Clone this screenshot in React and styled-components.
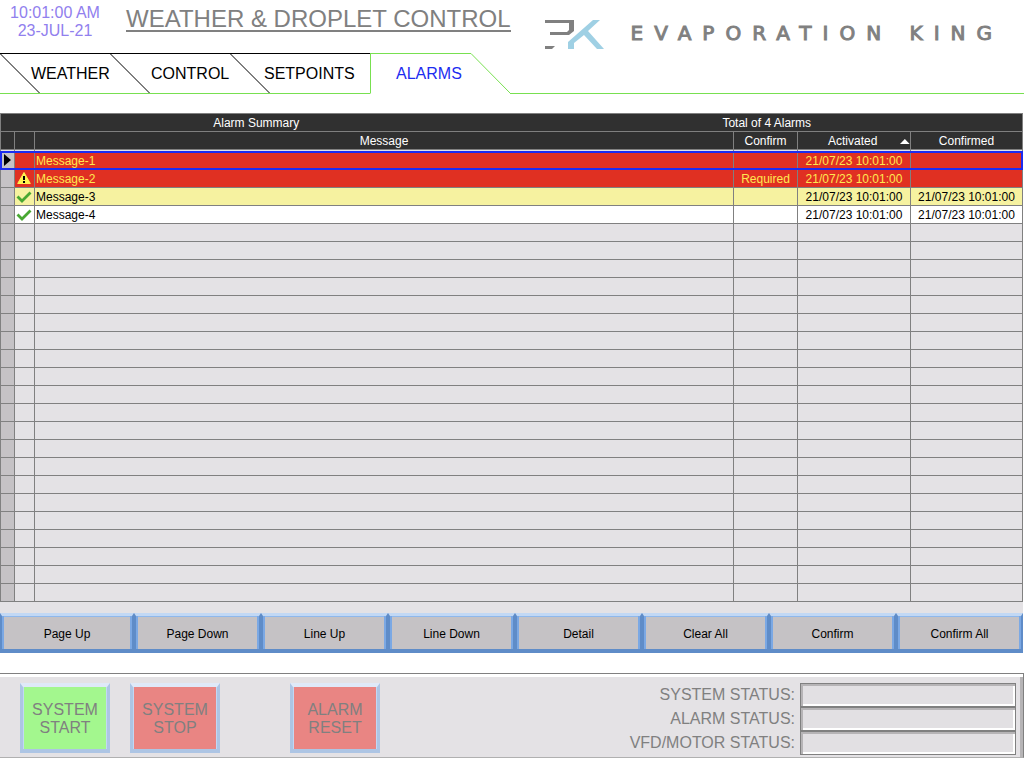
import React from 'react';
import styled, { createGlobalStyle } from 'styled-components';

const Global = createGlobalStyle`
  * { box-sizing: border-box; }
  body { margin: 0; background: #fff; font-family: "Liberation Sans", Arial, sans-serif; }
  button, input { font-family: inherit; }
`;

const Page = styled.div`
  display: flex;
  flex-direction: column;
  min-height: 100vh;
`;

const Header = styled.header`
  display: flex;
  align-items: flex-start;
  height: 53px;
`;

const Clock = styled.div`
  width: 110px;
  padding-top: 4px;
  font-size: 16px;
  line-height: 18px;
  text-align: center;
  color: #9180ee;
`;

const Title = styled.h1`
  margin: 8px 0 0 16px;
  border-bottom: 2px solid #808080;
  font-size: 24px;
  line-height: 22px;
  font-weight: 400;
  color: #808080;
  white-space: nowrap;
`;

const Brand = styled.div`
  display: flex;
  align-items: flex-start;
  margin-left: auto;
  padding: 19px 32px 0 0;
`;

const Mark = styled.svg`
  width: 60px;
  height: 31px;
  margin-right: 26px;
`;

const BrandName = styled.div`
  padding-top: 2px;
  font-family: "DejaVu Sans", sans-serif;
  font-size: 20px;
  line-height: 24px;
  letter-spacing: 11px;
  margin-right: -11px;
  color: #808080;
  -webkit-text-stroke: 1px #808080;
  white-space: nowrap;
`;

const Tabs = styled.nav`
  display: flex;
  height: 41px;
`;

const Tab = styled.a`
  display: flex;
  width: ${(p) => p.$width}px;
  border-top: 1px solid ${(p) => (p.$active ? '#78e050' : '#000')};
  border-bottom: 1px solid ${(p) => (p.$active ? 'transparent' : '#78e050')};
  border-left: ${(p) => (p.$active ? '1px solid #78e050' : 'none')};
  color: ${(p) => (p.$active ? '#1c2cf0' : '#000')};
  font-size: 16px;
  line-height: 39px;
  text-decoration: none;
`;

const TabText = styled.span`
  padding-left: ${(p) => p.$inset}px;
`;

const Slant = styled.svg`
  width: 40px;
  height: 41px;
  flex: none;
  margin: -1px -40px -1px 0;
`;

const TabEnd = styled.svg`
  width: 39px;
  height: 41px;
  flex: none;
`;

const TabRule = styled.div`
  flex: 1;
  border-bottom: 1px solid #78e050;
`;

const AlarmPanel = styled.main`
  margin: 19px 1px 0 0;
  background: #e4e2e5;
`;

const AlarmTable = styled.table`
  width: 100%;
  table-layout: fixed;
  border-collapse: separate;
  border-spacing: 0;
  font-size: 12px;
  line-height: 15px;
`;

const Caption = styled.caption`
  padding-top: 2px;
  border: 1px solid #808080;
  background: #303030;
  color: #fff;
`;

const CaptionRow = styled.div`
  display: grid;
  grid-template-columns: 1fr 1fr;
`;

const Col = styled.col`
  width: ${(p) => (p.$width ? `${p.$width}px` : 'auto')};
`;

const HeadCell = styled.th`
  height: 19px;
  padding: 2px 0;
  border-right: 1px solid #808080;
  background: #303030;
  box-shadow: inset 0 -1px #e4e2e5, inset 0 -2px #808080;
  color: #fff;
  font-weight: 400;
  &:first-child { border-left: 1px solid #808080; }
`;

const SortHead = styled.div`
  display: flex;
  justify-content: center;
  align-items: center;
  gap: 23px;
  padding-left: 30px;
`;

const tones = {
  alarm: ['#e03022', '#ffe850'],
  cleared: ['#f6f2a0', '#000'],
  confirmed: ['#fff', '#000'],
  empty: ['#e4e2e5', '#000'],
};

const Row = styled.tr`
  height: ${(p) => (p.$selected ? 19 : 18)}px;
  background: ${(p) => tones[p.$tone][0]};
  color: ${(p) => tones[p.$tone][1]};
  outline: ${(p) => (p.$selected ? '2px solid #1c2cf0' : 'none')};
  outline-offset: -2px;
`;

const Cell = styled.td`
  padding: 2px 1px 0;
  border-right: 1px solid #808080;
  border-bottom: 1px solid #808080;
  text-align: ${(p) => p.$align || 'center'};
  white-space: nowrap;
`;

const SelectCell = styled(Cell)`
  padding: 0;
  border-left: 1px solid #808080;
  background: #c5c2c5;
`;

const StateCell = styled(Cell)`
  padding: 1px 2px 0 1px;
  vertical-align: top;
`;

const Glyph = styled.svg`
  display: block;
  margin: 0 auto;
`;

const Commands = styled.div`
  display: grid;
  grid-template-columns: 134fr repeat(7, 127fr);
  padding-top: 11px;
`;

const CommandButton = styled.button`
  height: 40px;
  padding: 2px 0 0;
  border: solid;
  border-width: 3px 2px 4px;
  border-color: #c2d8f4 #5f8cc8 #5f8cc8;
  box-shadow: inset 2px 0 #7ba8e4, inset -2px 0 #7ba8e4, inset 0 1px #8fb8ec;
  background: #c5c2c5;
  color: #000;
  font-size: 12px;
`;

const Footer = styled.footer`
  display: flex;
  justify-content: space-between;
  align-items: flex-start;
  margin-top: 20px;
  padding: 6px 7px 2px 20px;
  border: solid;
  border-width: 1px 1px 1px 0;
  border-color: #808080 #808080 #b0b0b0;
  box-shadow: inset 0 3px #fff, inset -3px 0 #b6b4b6;
  background: #e4e2e5;
`;

const Actions = styled.div`
  display: flex;
  gap: 20px;
  padding-top: 3px;
`;

const ActionButton = styled.button`
  width: 90px;
  height: 70px;
  padding: 2px 0 0;
  margin-left: ${(p) => (p.$apart ? 50 : 0)}px;
  border: solid;
  border-width: 4px 3px;
  border-color: #dfe9f8 #adc5e4 #adc5e4;
  background: ${(p) => p.$color};
  box-shadow: inset 1px 0 #c2d8f4, inset -1px 0 #c2d8f4;
  color: #808080;
  font-size: 16px;
  line-height: 18px;
`;

const StatusForm = styled.div`
  display: grid;
  grid-template-columns: auto 216px;
  column-gap: 5px;
  padding-top: 3px;
`;

const StatusLabel = styled.label`
  color: #808080;
  font-size: 16px;
  line-height: 24px;
  text-align: right;
`;

const StatusField = styled.input`
  width: 100%;
  height: 24px;
  border: 1px solid #808080;
  border-radius: 0;
  background: #e2e0e3;
  box-shadow: inset 2px 2px #b6b4b6, inset -2px -2px #fff;
  outline: none;
`;

const time = '21/07/23 10:01:00';
const alarms = [
  { message: 'Message-1', tone: 'alarm', activated: time, selected: true },
  { message: 'Message-2', tone: 'alarm', icon: 'warning', confirm: 'Required', activated: time },
  { message: 'Message-3', tone: 'cleared', icon: 'check', activated: time, confirmed: time },
  { message: 'Message-4', tone: 'confirmed', icon: 'check', activated: time, confirmed: time },
  ...Array.from({ length: 21 }, () => ({ tone: 'empty' })),
];

const commands = ['Page Up', 'Page Down', 'Line Up', 'Line Down', 'Detail', 'Clear All', 'Confirm', 'Confirm All'];
const statuses = ['SYSTEM STATUS:', 'ALARM STATUS:', 'VFD/MOTOR STATUS:'];

function StateIcon({ kind }) {
  if (kind === 'warning') {
    return (
      <Glyph width="16" height="14" viewBox="0 0 16 14" role="img" aria-label="Unconfirmed">
        <path d="M8 1.5 14.3 12.5H1.7Z" fill="#fff250" stroke="#fff250" strokeLinejoin="round" />
        <path d="M7 5h2v4H7zM7 10h2v2H7z" fill="#000" />
      </Glyph>
    );
  }
  if (kind === 'check') {
    return (
      <Glyph width="16" height="14" viewBox="0 0 16 14" role="img" aria-label="Confirmed">
        <path d="M1.5 7.5 6 12 14.5 3.5" fill="none" stroke="#48a832" strokeWidth="2.8" />
      </Glyph>
    );
  }
  return null;
}

function TabSlant() {
  return (
    <Slant viewBox="0 0 40 41" aria-hidden="true">
      <path d="M0 0.5 39.5 40" stroke="#000" fill="none" />
    </Slant>
  );
}

export default function App() {
  return (
    <Page>
      <Global />
      <Header>
        <Clock>
          <div>10:01:00 AM</div>
          <div>23-JUL-21</div>
        </Clock>
        <Title>WEATHER &amp; DROPLET CONTROL</Title>
        <Brand>
          <Mark viewBox="0 0 60 31" aria-hidden="true">
            <path d="M0 1H29V12L24 16H5V13H22L24 11V4H0Z" fill="#808080" />
            <path d="M0 27H10L7 30H0Z" fill="#808080" />
            <path d="M48 1H55L43 12 59 30H52L39 16 29 24V30H23V23Z" fill="#9fd0e4" />
          </Mark>
          <BrandName>EVAPORATION KING</BrandName>
        </Brand>
      </Header>

      <Tabs>
        <Tab href="#weather" $width={110}><TabSlant /><TabText $inset={31}>WEATHER</TabText></Tab>
        <Tab href="#control" $width={120}><TabSlant /><TabText $inset={41}>CONTROL</TabText></Tab>
        <Tab href="#setpoints" $width={140}><TabSlant /><TabText $inset={34}>SETPOINTS</TabText></Tab>
        <Tab href="#alarms" $width={101} $active aria-current="page"><TabText $inset={25}>ALARMS</TabText></Tab>
        <TabEnd viewBox="0 0 39 41" aria-hidden="true">
          <path d="M0 0.5 39.5 40.5" stroke="#78e050" fill="none" />
        </TabEnd>
        <TabRule />
      </Tabs>

      <AlarmPanel>
        <AlarmTable>
          <Caption>
            <CaptionRow>
              <span>Alarm Summary</span>
              <span>Total of 4 Alarms</span>
            </CaptionRow>
          </Caption>
          <colgroup>
            <Col $width={15} />
            <Col $width={20} />
            <Col />
            <Col $width={64} />
            <Col $width={113} />
            <Col $width={112} />
          </colgroup>
          <thead>
            <tr>
              <HeadCell aria-label="Selected" />
              <HeadCell aria-label="State" />
              <HeadCell scope="col">Message</HeadCell>
              <HeadCell scope="col">Confirm</HeadCell>
              <HeadCell scope="col" aria-sort="ascending">
                <SortHead>
                  Activated
                  <svg width="10" height="5" viewBox="0 0 10 5" aria-hidden="true">
                    <path d="M5 0 10 5H0Z" fill="#fff" />
                  </svg>
                </SortHead>
              </HeadCell>
              <HeadCell scope="col">Confirmed</HeadCell>
            </tr>
          </thead>
          <tbody>
            {alarms.map((a, i) => (
              <Row key={i} $tone={a.tone} $selected={a.selected}>
                <SelectCell>
                  {a.selected && (
                    <Glyph width="7" height="12" viewBox="0 0 7 12" aria-hidden="true">
                      <path d="M0 0 7 6 0 12Z" fill="#000" />
                    </Glyph>
                  )}
                </SelectCell>
                <StateCell><StateIcon kind={a.icon} /></StateCell>
                <Cell $align="left">{a.message}</Cell>
                <Cell>{a.confirm}</Cell>
                <Cell>{a.activated}</Cell>
                <Cell>{a.confirmed}</Cell>
              </Row>
            ))}
          </tbody>
        </AlarmTable>
        <Commands>
          {commands.map((c) => <CommandButton key={c} type="button">{c}</CommandButton>)}
        </Commands>
      </AlarmPanel>

      <Footer>
        <Actions>
          <ActionButton type="button" $color="#a3f78e">SYSTEM<br />START</ActionButton>
          <ActionButton type="button" $color="#e98583">SYSTEM<br />STOP</ActionButton>
          <ActionButton type="button" $color="#e98583" $apart>ALARM<br />RESET</ActionButton>
        </Actions>
        <StatusForm>
          {statuses.map((s, i) => (
            <React.Fragment key={s}>
              <StatusLabel htmlFor={`status-${i}`}>{s}</StatusLabel>
              <StatusField id={`status-${i}`} type="text" readOnly />
            </React.Fragment>
          ))}
        </StatusForm>
      </Footer>
    </Page>
  );
}
